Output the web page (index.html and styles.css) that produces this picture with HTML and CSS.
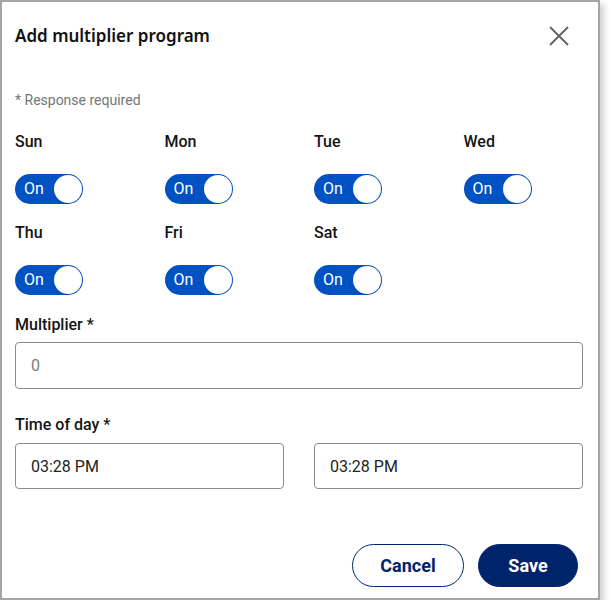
FILE: index.html
```html
<!DOCTYPE html>
<html lang="en">
<head>
<meta charset="utf-8">
<title>Add multiplier program</title>
<link rel="stylesheet" href="styles.css">
</head>
<body>
<div class="dialog">
  <div class="header">
    <h1 class="title">Add multiplier program</h1>
    <button class="close" aria-label="Close">
      <svg width="20" height="20" viewBox="0 0 20 20"><path d="M1 1L19 19M19 1L1 19" stroke="#666" stroke-width="2" fill="none"/></svg>
    </button>
  </div>
  <p class="required">* Response required</p>
  <div class="days">
    <div class="day"><div class="day-label">Sun</div><div class="toggle"><span class="toggle-text">On</span><span class="knob"></span></div></div>
    <div class="day"><div class="day-label">Mon</div><div class="toggle"><span class="toggle-text">On</span><span class="knob"></span></div></div>
    <div class="day"><div class="day-label">Tue</div><div class="toggle"><span class="toggle-text">On</span><span class="knob"></span></div></div>
    <div class="day"><div class="day-label">Wed</div><div class="toggle"><span class="toggle-text">On</span><span class="knob"></span></div></div>
    <div class="day"><div class="day-label">Thu</div><div class="toggle"><span class="toggle-text">On</span><span class="knob"></span></div></div>
    <div class="day"><div class="day-label">Fri</div><div class="toggle"><span class="toggle-text">On</span><span class="knob"></span></div></div>
    <div class="day"><div class="day-label">Sat</div><div class="toggle"><span class="toggle-text">On</span><span class="knob"></span></div></div>
  </div>
  <div class="field">
    <div class="field-label">Multiplier *</div>
    <div class="input placeholder">0</div>
  </div>
  <div class="field field-time">
    <div class="field-label">Time of day *</div>
    <div class="time-row">
      <div class="input input-time">03:28 PM</div>
      <div class="input input-time">03:28 PM</div>
    </div>
  </div>
  <div class="footer">
    <button class="btn btn-cancel">Cancel</button>
    <button class="btn btn-save">Save</button>
  </div>
</div>
</body>
</html>
```
FILE: styles.css
```css
html, body {
  margin: 0;
  padding: 0;
  background: #ffffff;
}
body {
  font-family: Roboto, "Liberation Sans", sans-serif;
  color: #1a1a1a;
}
.dialog {
  width: 600px;
  height: 600px;
  box-sizing: border-box;
  border: 2px solid #a6a6a6;
  background: #ffffff;
  box-shadow: 4px 4px 6px rgba(0, 0, 0, 0.18);
  padding: 22px 15px 11px 13px;
  display: flex;
  flex-direction: column;
}
.header {
  display: flex;
  align-items: center;
  justify-content: space-between;
  height: 24px;
}
.title {
  margin: 0;
  font-family: "Noto Sans", "Open Sans", sans-serif;
  font-weight: 600;
  font-size: 17px;
  line-height: 24px;
  color: #111111;
}
.close {
  border: 0;
  background: none;
  padding: 0;
  margin-right: 14px;
  width: 20px;
  height: 20px;
  display: flex;
}
.required {
  margin: 43px 0 0;
  font-size: 14px;
  line-height: 18px;
  color: #767676;
}
.days {
  margin-top: 23px;
  display: grid;
  grid-template-columns: repeat(4, 1fr);
  column-gap: 30px;
  row-gap: 19px;
}
.day-label {
  font-size: 16px;
  font-weight: 500;
  line-height: 20px;
  color: #141414;
}
.toggle {
  margin-top: 22px;
  width: 68px;
  height: 30px;
  border-radius: 15px;
  background: #0052c2;
  position: relative;
  display: flex;
  align-items: center;
  box-sizing: border-box;
  padding-left: 9px;
}
.toggle-text {
  color: #ffffff;
  font-size: 16px;
  line-height: 20px;
}
.knob {
  position: absolute;
  right: 1px;
  top: 1px;
  width: 28px;
  height: 28px;
  border-radius: 50%;
  background: #ffffff;
  box-shadow: 0 1px 1px rgba(0, 0, 0, 0.15);
}
.field {
  margin-top: 20px;
}
.field-time {
  margin-top: 26px;
}
.field-label {
  font-size: 16px;
  font-weight: 500;
  line-height: 20px;
  color: #141414;
}
.input {
  margin-top: 7px;
  height: 47px;
  box-sizing: border-box;
  border: 1px solid #8c8c8c;
  border-radius: 4px;
  padding-left: 15px;
  display: flex;
  align-items: center;
  font-size: 16px;
  color: #222222;
}
.placeholder {
  color: #7a7a7a;
}
.time-row {
  display: grid;
  grid-template-columns: 1fr 1fr;
  column-gap: 30px;
}
.input-time {
  margin-top: 8px;
  height: 46px;
}
.footer {
  margin-top: auto;
  display: flex;
  justify-content: flex-end;
  gap: 14px;
  padding-right: 5px;
}
.btn {
  height: 43px;
  border-radius: 22px;
  font-family: Roboto, "Liberation Sans", sans-serif;
  font-weight: 700;
  font-size: 18px;
  cursor: pointer;
}
.btn-cancel {
  width: 112px;
  background: #ffffff;
  border: 1px solid #00246b;
  color: #00246b;
}
.btn-save {
  width: 100px;
  background: #00246b;
  border: 1px solid #00246b;
  color: #ffffff;
}
```
